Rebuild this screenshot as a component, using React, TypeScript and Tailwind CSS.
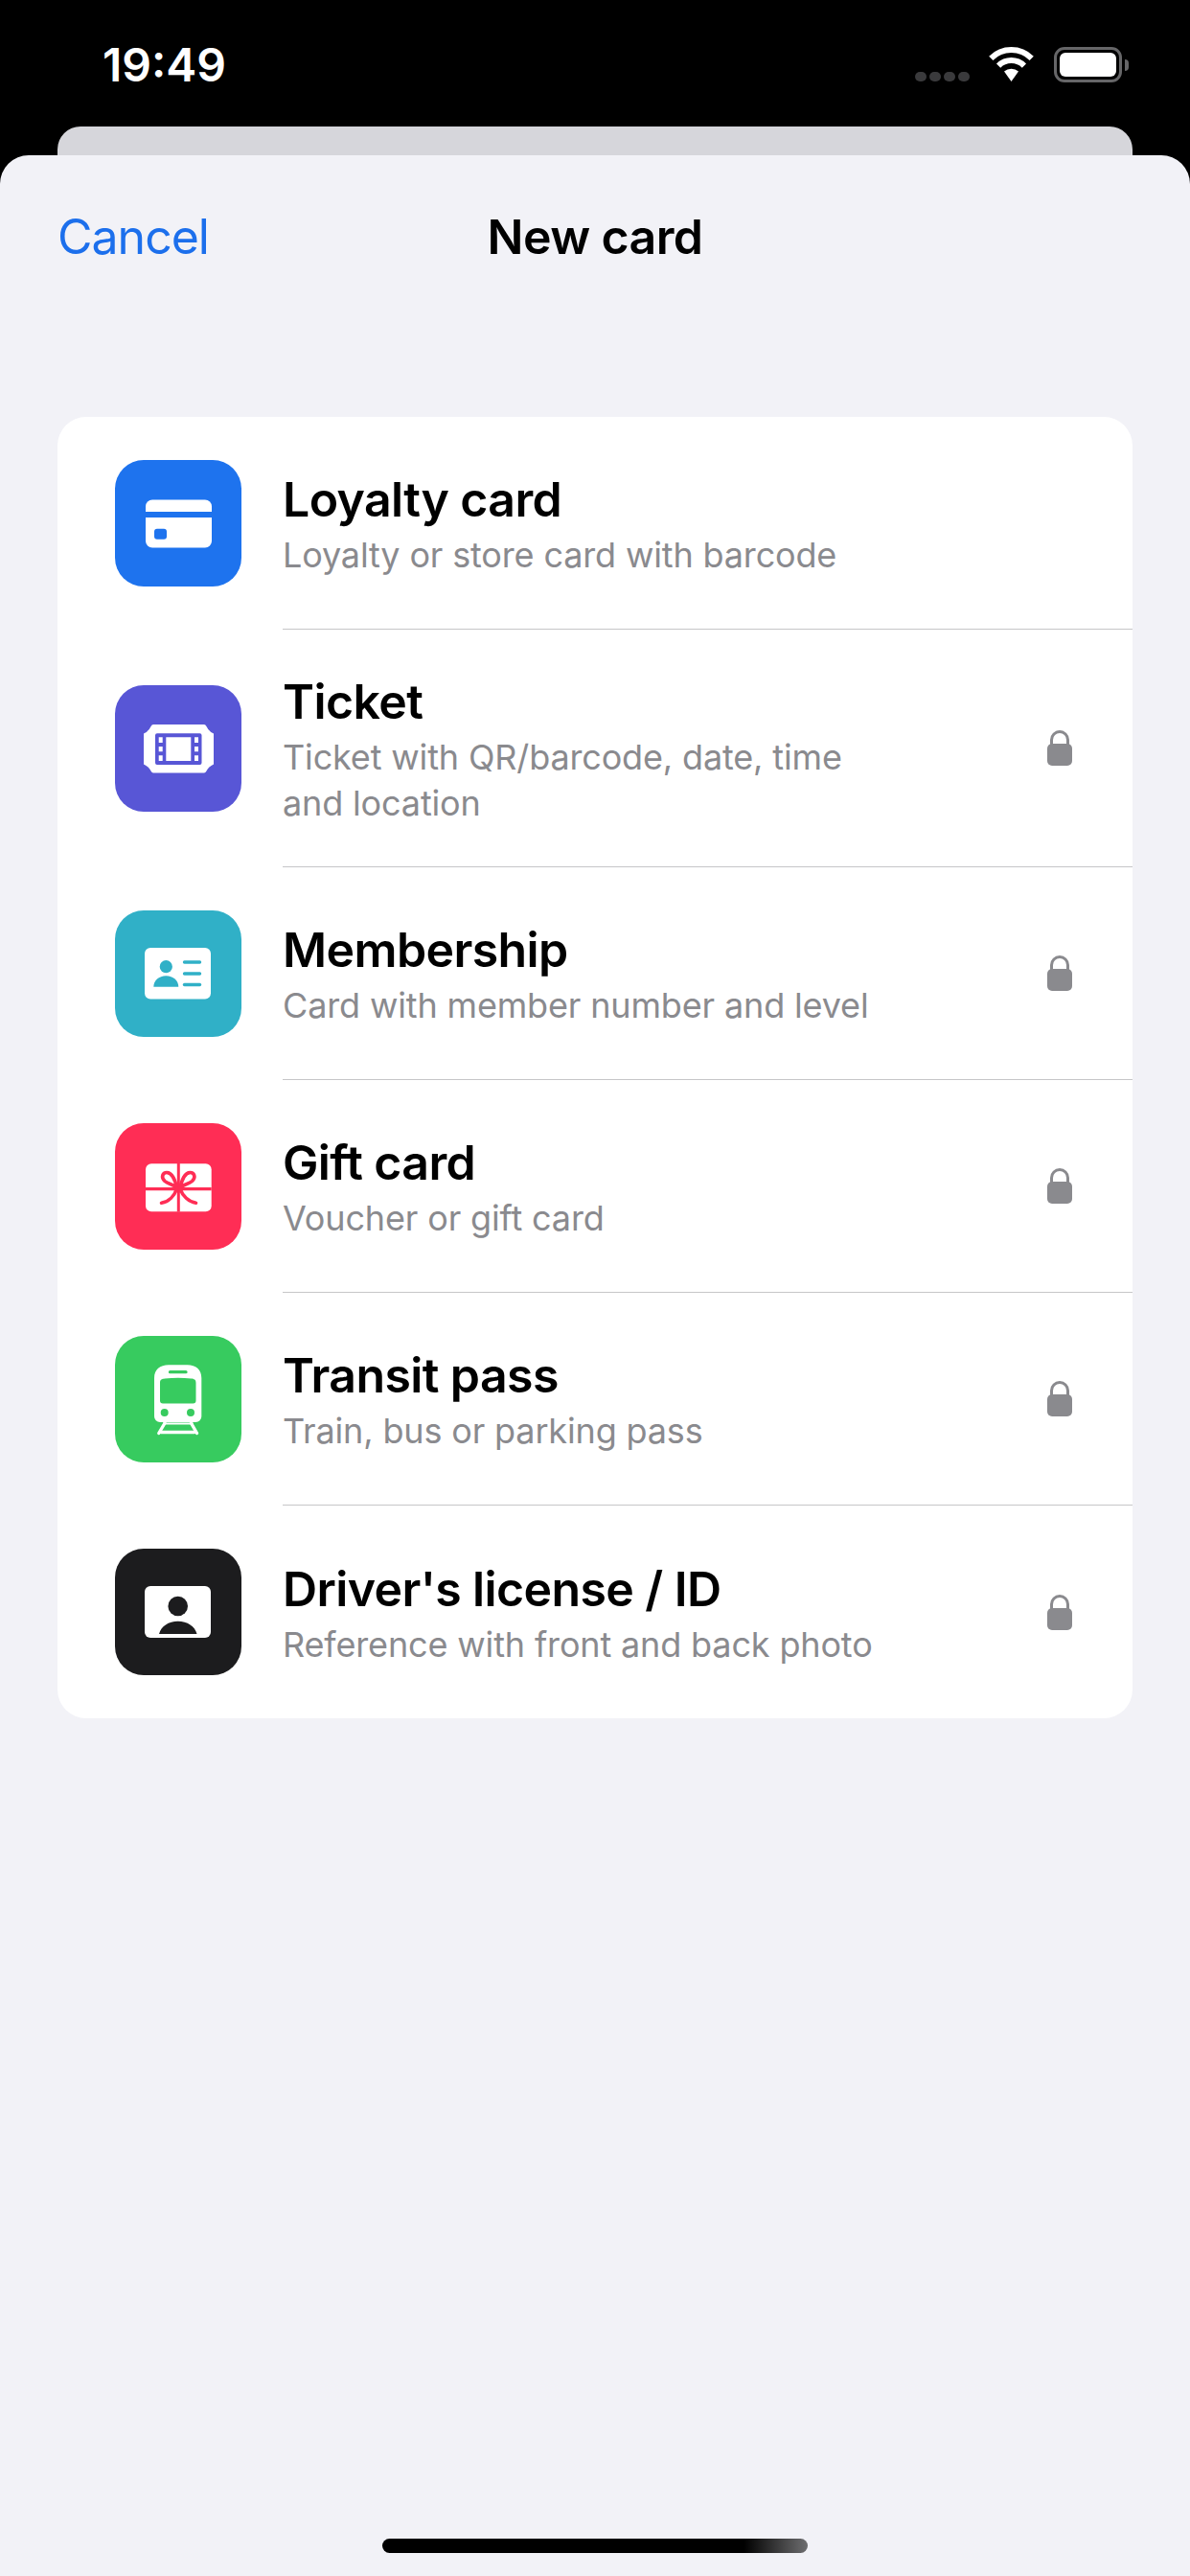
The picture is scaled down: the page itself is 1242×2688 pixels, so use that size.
import React from "react"

const IconCard = () => (
    <svg viewBox="0 0 132 132" className="w-full h-full">
        <path fill="#fff" d="M32 54v-5.500a7 7 0 0 1 7-7h55a7 7 0 0 1 7 7V54z" />
        <path fill="#fff" fillRule="evenodd" d="M32 60h69v24.500a7 7 0 0 1-7 7H39a7 7 0 0 1-7-7z M44 71.700a3 3 0 0 0-3 3v5a3 3 0 0 0 3 3h7a3 3 0 0 0 3-3v-5a3 3 0 0 0-3-3z" />
    </svg>
)

const IconTicket = () => (
    <svg viewBox="0 0 132 132" className="w-full h-full">
        <path fill="#fff" d="M40 41h53q1.500 0 2.500 2q2 5 7.500 7.500V82.500q-5.500 2.500-7.500 7q-1 2-2.500 2H40q-1.500 0-2.500-2q-2-4.500-7.500-7V50.500q5.500-2.500 7.500-7.500q1-2 2.500-2z" />
        <path fill="#5856d6" fillRule="evenodd" d="M44 50.300h44.500a2 2 0 0 1 2 2V81a2 2 0 0 1-2 2H44a2 2 0 0 1-2-2V52.300a2 2 0 0 1 2-2z M53.300 54.300V79H79.300V54.300z M45.700 54.300V60H49.700V54.300z M45.700 64V69.300H49.700V64z M45.700 73.300V79H49.700V73.300z M83 54.300V60H87V54.300z M83 64V69.300H87V64z M83 73.300V79H87V73.300z" />
    </svg>
)

const IconMember = () => (
    <svg viewBox="0 0 132 132" className="w-full h-full">
        <rect x="31" y="39" width="69" height="53.500" rx="6" fill="#fff" />
        <circle cx="53.300" cy="58.700" r="6.600" fill="#30b0c7" />
        <path fill="#30b0c7" d="M40.300 79.700c0-6.500 5.500-11.500 13-11.500s13 5 13 11.500z" />
        <g stroke="#30b0c7" strokeWidth="3.400" strokeLinecap="round">
            <path d="M72.500 54H88.500" />
            <path d="M72.500 66H88.500" />
            <path d="M72.500 77.500H88.500" />
        </g>
    </svg>
)

const IconGift = () => (
    <svg viewBox="0 0 132 132" className="w-full h-full">
        <rect x="32" y="42.300" width="68.700" height="50" rx="6" fill="#fff" />
        <g fill="none" stroke="#ff2d55">
            <path strokeWidth="3" d="M66.300 42V92.500" />
            <path strokeWidth="3.300" d="M32 68.700H100.700" />
            <g strokeWidth="3.600" strokeLinecap="round">
                <path d="M64.800 67.500C60 63 56 64 52 60.500C47.500 56 50 51.500 54 51.500C60 51.500 62.500 59 64.800 67.500z" />
                <path d="M67.800 67.500C72.500 63 76.500 64 80.500 60.500C85 56 82.500 51.500 78.500 51.500C72.500 51.500 70 59 67.800 67.500z" />
                <path d="M64.500 68.500C62 76 56 82 48.500 83.300" />
                <path d="M68 68.500C70.500 76 77 82 84.500 83.300" />
            </g>
        </g>
    </svg>
)

const IconTrain = () => (
    <svg viewBox="0 0 132 132" className="w-full h-full">
        <path fill="#fff" fillRule="evenodd" d="M56 30.300H75.500C84.500 30.300 90.300 35 90.300 44V84a6 6 0 0 1-6 6H47a6 6 0 0 1-6-6V44C41 35 47 30.300 56 30.300z M57.500 36a1.600 1.600 0 0 0 0 3.300H74a1.600 1.600 0 0 0 0-3.300z M52 44.500C49 44.800 47 45.500 47 49V67.500a3 3 0 0 0 3 3H81.500a3 3 0 0 0 3-3V49C84.500 45.500 82.500 44.800 79.500 44.500Q66 43 52 44.500z M51.700 76a4 4 0 1 0 0 8a4 4 0 0 0 0-8z M79 76a4 4 0 1 0 0 8a4 4 0 0 0 0-8z" />
        <g stroke="#fff" strokeWidth="3.400" strokeLinecap="round" fill="none">
            <path d="M52 91L45.800 101.500" />
            <path d="M79.500 91L85.500 101.500" />
            <path d="M48 100.500H83" />
        </g>
        <path stroke="#fff" strokeWidth="2" d="M50 91.500H81.500" />
    </svg>
)

const IconId = () => (
    <svg viewBox="0 0 132 132" className="w-full h-full">
        <rect x="31" y="39" width="69" height="54" rx="6" fill="#fff" />
        <circle cx="65.700" cy="60" r="10.300" fill="#1c1c1e" />
        <path fill="#1c1c1e" d="M46 89C48 81 56 75.700 65.700 75.700S83.500 81 85.500 89z" />
    </svg>
)

const LockIcon = () => (
    <svg viewBox="0 0 26 37" className="w-[26px] h-[37px]">
        <path fill="none" stroke="#8a8a8e" strokeWidth="3" d="M4.500 16V10a8.500 8.500 0 0 1 17 0v6" />
        <rect x="0" y="14" width="26" height="23" rx="5" fill="#8a8a8e" />
    </svg>
)

const rows = [
    { title: "Loyalty card", desc: "Loyalty or store card with barcode", bg: "bg-[#1e73ee]", icon: <IconCard />, locked: false },
    { title: "Ticket", desc: "Ticket with QR/barcode, date, time and location", bg: "bg-[#5856d6]", icon: <IconTicket />, locked: true },
    { title: "Membership", desc: "Card with member number and level", bg: "bg-[#30b0c7]", icon: <IconMember />, locked: true },
    { title: "Gift card", desc: "Voucher or gift card", bg: "bg-[#ff2d55]", icon: <IconGift />, locked: true },
    { title: "Transit pass", desc: "Train, bus or parking pass", bg: "bg-[#37cb5f]", icon: <IconTrain />, locked: true },
    { title: "Driver's license / ID", desc: "Reference with front and back photo", bg: "bg-[#1c1c1e]", icon: <IconId />, locked: true },
]

const StatusBar = () => (
    <div className="h-[132px] shrink-0 flex items-start justify-between pl-[107px] pr-[64px] pt-[38px]">
        <span className="text-white text-[48px] leading-[58px] font-semibold mt-[1px]">19:49</span>
        <div className="flex items-start mt-[11px]">
            <div className="flex gap-[3px] mt-[26px] mr-[20px]">
                <div className="w-[12px] h-[10px] rounded-full bg-[#3a3a3c]" />
                <div className="w-[12px] h-[10px] rounded-full bg-[#3a3a3c]" />
                <div className="w-[12px] h-[10px] rounded-full bg-[#3a3a3c]" />
                <div className="w-[12px] h-[10px] rounded-full bg-[#3a3a3c]" />
            </div>
            <svg viewBox="0 0 47 36" className="w-[47px] h-[36px] mr-[21px]">
                <g fill="none" stroke="#fff" strokeWidth="6">
                    <path d="M2.300 11.800A30 30 0 0 1 44.700 11.800" />
                    <path d="M10.100 19.600A19 19 0 0 1 36.900 19.600" />
                </g>
                <path fill="#fff" d="M23.500 36L16 25.500A11.500 11.500 0 0 1 31 25.500z" />
            </svg>
            <div className="w-[71px] h-[37px] rounded-[11px] border-[3px] border-[#666668] p-[3px]">
                <div className="w-full h-full rounded-[6px] bg-white" />
            </div>
            <div className="w-[4px] h-[12px] mt-[13px] ml-[3px] rounded-r-full bg-[#666668]" />
        </div>
    </div>
)

const CardRow = ({ row, last }: { row: (typeof rows)[number]; last: boolean }) => (
    <div className="flex items-center">
        <div className={`w-[132px] h-[132px] ml-[60px] shrink-0 rounded-[30px] ${row.bg}`}>{row.icon}</div>
        <div className={`flex-1 ml-[43px] min-h-[222px] flex items-center justify-between pr-[63px] ${last ? "" : "border-b border-[#c6c6c8]"}`}>
            <div className="w-[640px] pt-[45px] pb-[42px]">
                <div className="text-[50px] leading-[60px] font-semibold text-black tracking-[-0.6px]">{row.title}</div>
                <div className="text-[36px] leading-[48px] mt-[4px] text-[#8a8a8e] tracking-[-0.15px]">{row.desc}</div>
            </div>
            {row.locked ? <LockIcon /> : null}
        </div>
    </div>
)

const App: React.FC = () => {
    return (
        <div className="w-[1242px] h-[2688px] bg-black flex flex-col overflow-hidden font-['Inter',sans-serif]">
            <StatusBar />
            <div className="h-[30px] shrink-0 mx-[60px] rounded-t-[24px] bg-[#d6d6db]" />
            <div className="flex-1 flex flex-col bg-[#f2f2f7] rounded-t-[30px]">
                <div className="h-[273px] shrink-0 grid grid-cols-3 items-start px-[60px] pt-[54px]">
                    <span className="text-[50px] leading-[62px] text-[#1c6fec] tracking-[-1px]">Cancel</span>
                    <span className="text-[50px] leading-[62px] font-semibold text-black text-center whitespace-nowrap tracking-[-0.6px]">New card</span>
                </div>
                <div className="mx-[60px] bg-white rounded-[30px] overflow-hidden">
                    {rows.map((row, i) => (
                        <CardRow key={row.title} row={row} last={i === rows.length - 1} />
                    ))}
                </div>
                <div className="mt-auto mb-[24px] mx-auto w-[444px] h-[15px] rounded-full bg-[linear-gradient(90deg,#000_85%,#6e6e70)]" />
            </div>
        </div>
    )
}

export default App
